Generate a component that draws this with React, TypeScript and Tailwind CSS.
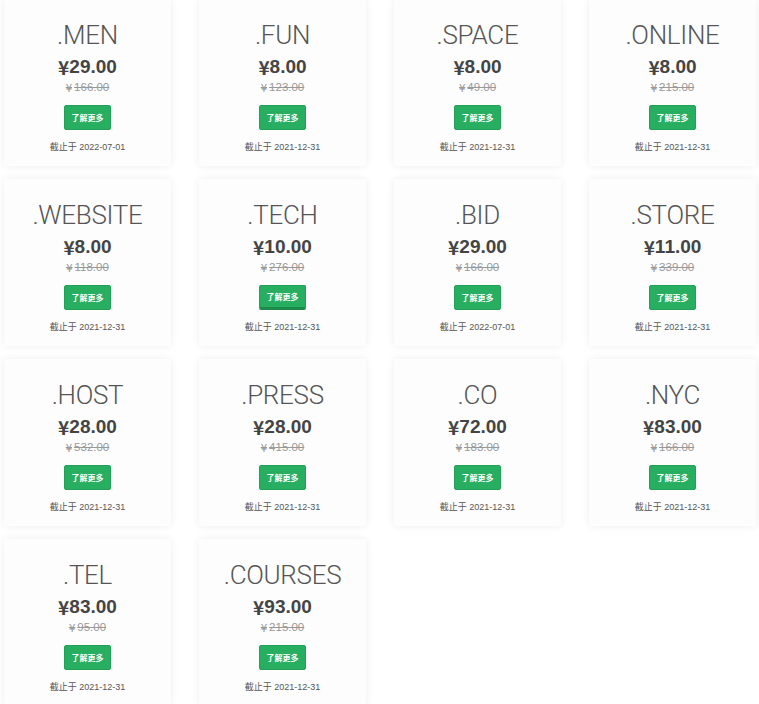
import React from 'react'

interface Domain {
	readonly name: string
	readonly price: string
	readonly original: string
	readonly deadline: string
}

const domains: Domain[] = [
	{ name: '.MEN', price: '29.00', original: '166.00', deadline: '2022-07-01' },
	{ name: '.FUN', price: '8.00', original: '123.00', deadline: '2021-12-31' },
	{ name: '.SPACE', price: '8.00', original: '49.00', deadline: '2021-12-31' },
	{ name: '.ONLINE', price: '8.00', original: '215.00', deadline: '2021-12-31' },
	{ name: '.WEBSITE', price: '8.00', original: '118.00', deadline: '2021-12-31' },
	{ name: '.TECH', price: '10.00', original: '276.00', deadline: '2021-12-31' },
	{ name: '.BID', price: '29.00', original: '166.00', deadline: '2022-07-01' },
	{ name: '.STORE', price: '11.00', original: '339.00', deadline: '2021-12-31' },
	{ name: '.HOST', price: '28.00', original: '532.00', deadline: '2021-12-31' },
	{ name: '.PRESS', price: '28.00', original: '415.00', deadline: '2021-12-31' },
	{ name: '.CO', price: '72.00', original: '183.00', deadline: '2021-12-31' },
	{ name: '.NYC', price: '83.00', original: '166.00', deadline: '2021-12-31' },
	{ name: '.TEL', price: '83.00', original: '95.00', deadline: '2021-12-31' },
	{ name: '.COURSES', price: '93.00', original: '215.00', deadline: '2021-12-31' }
]

const DomainCard = ({ domain, active }: { domain: Domain; active: boolean }) => {
	return (
		<div className="h-[167px] bg-[#fdfdfd] shadow-[0_0_8px_rgba(0,0,0,0.07)] flex flex-col items-center pt-[23px]">
			<h3 className="h-[26px] leading-[26px] text-[26px] font-light text-[#555] font-['Roboto','Liberation_Sans',sans-serif] tracking-[-0.3px]">
				{domain.name}
			</h3>
			<p className="mt-[6px] h-[24px] flex items-center text-[19px] font-bold text-[#444] font-['Liberation_Sans',sans-serif]">
				<span className="leading-none font-['Noto_Sans_CJK_SC',sans-serif]">¥</span>
				<span className="leading-none">{domain.price}</span>
			</p>
			<p className="mt-[2px] h-[16px] flex items-center text-[11.5px] text-[#999] line-through font-['Liberation_Sans',sans-serif]">
				<span className="leading-none font-['Noto_Sans_CJK_SC',sans-serif] pr-[2px]">¥</span>
				<span className="leading-none">{domain.original}</span>
			</p>
			{/* 2枚目の行の.TECHだけホバー状態 */}
			<button
				className={
					active
						? 'mt-[9px] w-[47px] h-[25px] rounded-[2px] bg-[#27ae60] border border-[#23a058] border-b-[3px] border-b-[#1c8a4a] text-white text-[8px] font-bold font-["Noto_Sans_CJK_SC",sans-serif]'
						: 'mt-[9px] w-[47px] h-[25px] rounded-[2px] bg-[#27ae60] border border-[#23a058] text-white text-[8px] font-bold font-["Noto_Sans_CJK_SC",sans-serif]'
				}
			>
				了解更多
			</button>
			<p className="mt-[11px] h-[12px] leading-[12px] text-[9px] text-[#555] font-['Liberation_Sans','Noto_Sans_CJK_SC',sans-serif]">
				截止于 {domain.deadline}
			</p>
		</div>
	)
}

const App = () => {
	return (
		<div className="bg-white min-h-screen overflow-hidden">
			<div className="grid grid-cols-[repeat(4,167px)] gap-x-[28px] gap-y-[13px] pl-[4px] -mt-[1px]">
				{domains.map((domain) => (
					<DomainCard key={domain.name} domain={domain} active={domain.name === '.TECH'} />
				))}
			</div>
		</div>
	)
}

export default App
